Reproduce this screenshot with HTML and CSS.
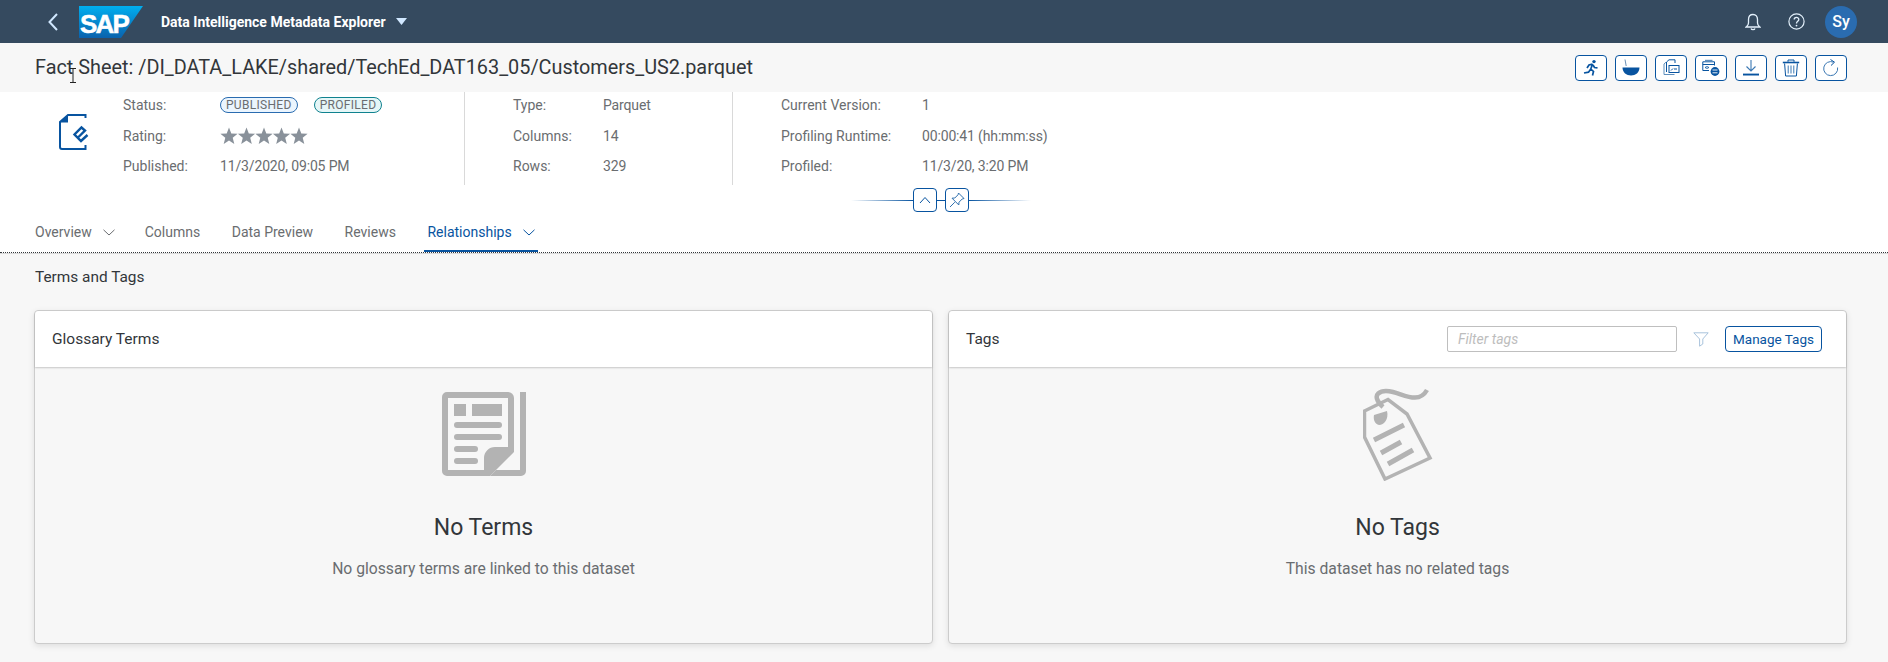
FILE: index.html
```html
<!DOCTYPE html>
<html>
<head>
<meta charset="utf-8"/>
<title>Fact Sheet</title>
<link rel="stylesheet" href="styles.css">
</head>
<body>

<header class="shell">
  <svg class="shell-back" width="12" height="20" viewBox="0 0 12 20"><path d="M10 2 L2.5 10 L10 18" fill="none" stroke="#d1e8ff" stroke-width="2"/></svg>
  <svg class="sap-logo" width="64" height="32" viewBox="0 0 64 32">
    <defs><linearGradient id="sapblue" x1="0" y1="0" x2="0" y2="1"><stop offset="0" stop-color="#00aeef"/><stop offset="1" stop-color="#0a62ad"/></linearGradient></defs>
    <polygon points="0,0 64,0 42,32 0,32" fill="url(#sapblue)"/>
    <text x="1" y="27" class="sap-text">SAP</text>
  </svg>
  <span class="shell-title">Data Intelligence Metadata Explorer</span>
  <svg class="shell-caret" width="11" height="7" viewBox="0 0 11 7"><polygon points="0,0 11,0 5.5,7" fill="#d1e8ff"/></svg>
  <span class="shell-space"></span>
  <svg class="shell-icon" width="16" height="18" viewBox="0 0 16 18"><path d="M8 1.5 C5 1.5 3.5 3.5 3.5 6.5 V10 C3.5 12 2.5 13 1.2 14 H14.8 C13.5 13 12.5 12 12.5 10 V6.5 C12.5 3.5 11 1.5 8 1.5 Z M6 15.5 C6.5 17 9.5 17 10 15.5" fill="none" stroke="#e3f0fb" stroke-width="1.3"/></svg>
  <svg class="shell-icon help" width="17" height="17" viewBox="0 0 17 17"><circle cx="8.5" cy="8.5" r="7.6" fill="none" stroke="#e3f0fb" stroke-width="1.2"/><path d="M6.2 6.6 C6.2 3.8 10.8 3.8 10.8 6.4 C10.8 8.2 8.5 8.2 8.5 10.4" fill="none" stroke="#e3f0fb" stroke-width="1.3"/><circle cx="8.5" cy="12.6" r="0.9" fill="#e3f0fb"/></svg>
  <span class="avatar">Sy</span>
</header>

<div class="titlebar">
  <h1>Fact Sheet: /DI_DATA_LAKE/shared/TechEd_DAT163_05/Customers_US2.parquet</h1>
  <div class="actions">
    <button class="icon-btn"><svg width="18" height="18" viewBox="0 0 18 18"><circle cx="12" cy="2.6" r="1.7" fill="#0854a0"/><path d="M10.5 5 L7 6 L5 9 M10.5 5 L8.8 10 L11.5 12.5 L10.5 16.5 M8.8 10 L6.5 13.2 L2 14 M11 6 L12.5 8.5 L15.5 8.8" fill="none" stroke="#0854a0" stroke-width="1.7"/></svg></button>
    <button class="icon-btn"><svg width="18" height="18" viewBox="0 0 18 18"><path d="M0.5 8.5 H17.5 C17.5 13.5 13.5 16.5 9 16.5 C4.5 16.5 0.5 13.5 0.5 8.5 Z" fill="#0854a0"/><path d="M3 0.5 L4.2 7" stroke="#6a8fb5" stroke-width="1" fill="none"/></svg></button>
    <button class="icon-btn"><svg width="18" height="18" viewBox="0 0 18 18"><path d="M4.5 13 V3 L7 0.8 H13 V4" fill="none" stroke="#0854a0" stroke-width="1"/><path d="M2 15.5 V5 L4 3.2 M2 15.5 H12.5" fill="none" stroke="#5d8ebd" stroke-width="1"/><rect x="7" y="6.5" width="10" height="7" fill="none" stroke="#0854a0"/><path d="M9 11.5 L11 9.5 M12 10 H15" stroke="#0854a0" fill="none"/></svg></button>
    <button class="icon-btn"><svg width="18" height="18" viewBox="0 0 18 18"><path d="M0.8 11.5 V2.8 H12.5 V6.5 M0.8 5.5 H12.5 M0.8 11.5 H7" fill="none" stroke="#0854a0"/><rect x="3" y="0.8" width="7.5" height="1.8" fill="#5d8ebd"/><path d="M3 8.5 L5 7.5 L7 8.5 L5 9.5 Z" fill="none" stroke="#0854a0" stroke-width="0.8"/><circle cx="13" cy="12.5" r="4.4" fill="#0854a0"/><path d="M10.5 11 H15.5 M10.5 13.8 H15.5" stroke="#fff" stroke-width="0.9"/></svg></button>
    <button class="icon-btn"><svg width="18" height="18" viewBox="0 0 18 18"><path d="M9 1 V11.5 M4.5 7.5 L9 12 L13.5 7.5" fill="none" stroke="#3b78b3" stroke-width="1.1"/><rect x="1" y="14.6" width="16" height="1.9" fill="#0854a0"/></svg></button>
    <button class="icon-btn"><svg width="18" height="18" viewBox="0 0 18 18"><path d="M0.8 3.5 H17.2" stroke="#0854a0" stroke-width="1.6" fill="none"/><path d="M6 2.8 V1 H12 V2.8" stroke="#0854a0" fill="none"/><path d="M2.6 4.5 L3.6 17 H14.4 L15.4 4.5" stroke="#0854a0" fill="none"/><path d="M6.2 6.5 V14.5 M9 6.5 V14.5 M11.8 6.5 V14.5" stroke="#3b78b3" fill="none"/></svg></button>
    <button class="icon-btn"><svg width="18" height="18" viewBox="0 0 18 18"><path d="M11.5 3.2 A7 7 0 1 0 15.6 8.5" fill="none" stroke="#3b78b3"/><path d="M8.5 0.5 L12.5 3.2 L9 6.5" fill="none" stroke="#0854a0"/></svg></button>
  </div>
</div>

<section class="facts">
  <svg class="doc-icon" width="31" height="36" viewBox="0 0 31 36">
    <path d="M26.5 4 V1 H9 L1 8 V33 A2 2 0 0 0 3 35 H26.5 V31" fill="none" stroke="#0854a0" stroke-width="2"/>
    <path d="M9 1 V8.5 H1 Z" fill="#0854a0"/>
    <path d="M19 23.5 L26 16.5 L22.5 13.5 L15.5 20.5 L22 27 L28.5 21" fill="none" stroke="#0854a0" stroke-width="2.4"/>
  </svg>
  <div class="facet facet-first">
    <span class="fact-label">Status:</span>
    <span class="fact-value pills"><span class="pill pill-blue">Published</span><span class="pill pill-teal">Profiled</span></span>
    <span class="fact-label">Rating:</span>
    <span class="fact-value"><svg class="stars" width="88" height="18" viewBox="0 0 88 18"><g fill="#89919a"><polygon id="st" points="9,0.5 11.3,6.4 17.6,6.8 12.7,10.8 14.3,17 9,13.6 3.7,17 5.3,10.8 0.4,6.8 6.7,6.4"/><use href="#st" x="17.5"/><use href="#st" x="35"/><use href="#st" x="52.5"/><use href="#st" x="70"/></g></svg></span>
    <span class="fact-label">Published:</span>
    <span class="fact-value">11/3/2020, 09:05 PM</span>
  </div>
  <div class="facet facet-second">
    <span class="fact-label">Type:</span><span class="fact-value">Parquet</span>
    <span class="fact-label">Columns:</span><span class="fact-value">14</span>
    <span class="fact-label">Rows:</span><span class="fact-value">329</span>
  </div>
  <div class="facet facet-third">
    <span class="fact-label">Current Version:</span><span class="fact-value">1</span>
    <span class="fact-label">Profiling Runtime:</span><span class="fact-value">00:00:41 (hh:mm:ss)</span>
    <span class="fact-label">Profiled:</span><span class="fact-value">11/3/20, 3:20 PM</span>
  </div>
</section>

<div class="collapse">
  <span class="collapse-line line-left"></span>
  <button class="icon-btn small"><svg width="12" height="8" viewBox="0 0 12 8"><path d="M1 7 L6 1.5 L11 7" fill="none" stroke="#0854a0"/></svg></button>
  <span class="collapse-mid"></span>
  <button class="icon-btn small"><svg width="16" height="16" viewBox="0 0 16 16"><path d="M9.5 1 L15 6.5 L13.2 7 L10 10.2 L9.8 13 L3 6.2 L5.8 6 L9 2.8 Z M5.8 10.2 L1 15" fill="none" stroke="#2f70ae"/></svg></button>
  <span class="collapse-line line-right"></span>
</div>

<nav class="tabs">
  <a class="tab tab-first">Overview<svg class="chev" width="12" height="7" viewBox="0 0 12 7"><path d="M0.5 0.8 L6 6 L11.5 0.8" fill="none" stroke="#6a6d70"/></svg></a>
  <a class="tab">Columns</a>
  <a class="tab">Data Preview</a>
  <a class="tab">Reviews</a>
  <a class="tab tab-active">Relationships<svg class="chev" width="12" height="7" viewBox="0 0 12 7"><path d="M0.5 0.8 L6 6 L11.5 0.8" fill="none" stroke="#0854a0"/></svg></a>
</nav>

<main class="content">
  <h2>Terms and Tags</h2>
  <div class="cards">
    <div class="card">
      <div class="card-head"><span class="card-title">Glossary Terms</span></div>
      <div class="card-body">
        <svg class="empty-icon" width="84" height="84" viewBox="0 0 84 84">
          <g fill="#b3b3b3">
            <path d="M5 0 H66 A6 6 0 0 1 72 6 V60 L48 84 H5 A5 5 0 0 1 0 79 V5 A5 5 0 0 1 5 0 Z M6 6 V78 H42 V66 A11 11 0 0 1 53 55 H66 V6 Z" fill-rule="evenodd"/>
            <path d="M78 0 H84 V79 A5 5 0 0 1 79 84 H48 L54 78 H78 Z"/>
            <rect x="12" y="12" width="12" height="12"/>
            <rect x="30" y="12" width="30" height="12"/>
            <rect x="12" y="30" width="48" height="6" rx="3"/>
            <rect x="12" y="42" width="48" height="6" rx="3"/>
            <rect x="12" y="54" width="24" height="6" rx="3"/>
            <rect x="12" y="66" width="24" height="6" rx="3"/>
          </g>
        </svg>
        <div class="empty-title">No Terms</div>
        <div class="empty-text">No glossary terms are linked to this dataset</div>
      </div>
    </div>
    <div class="card">
      <div class="card-head">
        <span class="card-title">Tags</span>
        <span class="filter-input">Filter tags</span>
        <svg class="filter-icon" width="16" height="15" viewBox="0 0 16 15"><path d="M0.8 0.8 H15.2 L9.8 7 V12 L6.6 14.2 V7 Z" fill="none" stroke="#a9c3dc"/></svg>
        <button class="text-btn">Manage Tags</button>
      </div>
      <div class="card-body">
        <svg class="empty-icon tag-icon" width="70" height="94" viewBox="0 0 70 94">
          <g fill="none" stroke="#b3b3b3">
            <path d="M1.5 24 L25 12.5 L44 27 L67 71 L22 92 L1.5 50 Z" stroke-width="3.5"/>
            <path d="M11 53 L41 38 M18 66 L38 55 M25 77 L50 63" stroke-width="5"/>
            <path d="M20 20 C6 7 18 2 30 5 C42 8 56 17 64 3" stroke-width="4.5"/>
          </g>
          <path d="M11 28 L24 24 C26 32 21 38 16 38 C12 37 10 33 11 28 Z" fill="#b3b3b3"/>
        </svg>
        <div class="empty-title">No Tags</div>
        <div class="empty-text">This dataset has no related tags</div>
      </div>
    </div>
  </div>
</main>

<svg class="cursor" width="8" height="15" viewBox="0 0 8 15"><path d="M1 0.5 H7 M4 0.5 V14.5 M1 14.5 H7" stroke="#222" fill="none"/></svg>

</body>
</html>
```

FILE: styles.css
```css
html, body {
   margin: 0;
   height: 662px;
   overflow: hidden;
   background-color: #f7f7f7;
   font-family: Roboto, "Liberation Sans", sans-serif;
   font-size: 14px;
   color: #32363a;
}

/* shell bar */
.shell {
   height: 43px;
   background-color: #354a5f;
   display: flex;
   align-items: center;
   padding: 0 31px 0 47px;
}

.shell-back {
   margin-right: 20px;
}

.sap-logo {
   margin-right: 18px;
}

.sap-text {
   font-family: "Liberation Sans", sans-serif;
   font-weight: bold;
   font-size: 26px;
   letter-spacing: -1.8px;
   fill: #fff;
   stroke: #fff;
   stroke-width: 0.5px;
}

.shell-title {
   color: #fff;
   font-weight: bold;
   font-size: 14px;
}

.shell-caret {
   margin-left: 10px;
}

.shell-space {
   flex: 1;
}

.shell-icon {
   margin-right: 27px;
}

.shell-icon.help {
   margin-right: 20px;
}

.avatar {
   width: 32px;
   height: 32px;
   border-radius: 50%;
   background-color: #2a6cb0;
   color: #fff;
   font-size: 16px;
   font-weight: 500;
   display: flex;
   align-items: center;
   justify-content: center;
}

/* title bar */
.titlebar {
   height: 49px;
   display: flex;
   align-items: center;
   justify-content: space-between;
   padding: 0 41px 0 35px;
   background-color: #f7f7f7;
}

h1 {
   margin: 0;
   font-size: 19.85px;
   font-weight: 400;
}

.actions {
   display: flex;
   gap: 8px;
}

.icon-btn {
   width: 32px;
   height: 26px;
   padding: 0;
   border: 1px solid #0854a0;
   border-radius: 4px;
   background-color: #fff;
   display: flex;
   align-items: center;
   justify-content: center;
}

.icon-btn.small {
   width: 24px;
   height: 24px;
}

/* facts */
.facts {
   height: 93px;
   background-color: #fff;
   display: flex;
}

.doc-icon {
   margin: 22px 33px 0 59px;
}

.facet {
   display: grid;
   grid-template-rows: repeat(3, 30.5px);
   align-items: start;
   align-content: start;
   color: #6a6d70;
   height: 93px;
   line-height: 26px;
}

.facet-first {
   grid-template-columns: 97px 1fr;
   width: 341px;
   border-right: 1px solid #d9d9d9;
}

.facet-second {
   grid-template-columns: 90px 1fr;
   width: 219px;
   padding-left: 48px;
   border-right: 1px solid #d9d9d9;
}

.facet-third {
   grid-template-columns: 141px 1fr;
   padding-left: 48px;
}

.fact-value {
   letter-spacing: -0.15px;
   height: 26px;
   display: flex;
   align-items: center;
}

.pills {
   gap: 16px;
}

.pill {
   font-size: 12px;
   line-height: 14px;
   text-transform: uppercase;
   padding: 0 5px;
   border-radius: 8px;
   border: 1px solid;
   letter-spacing: 0.3px;
}

.pill-blue {
   background-color: #ebf5fe;
   border-color: #2a6cb0;
}

.pill-teal {
   background-color: #e5f6f7;
   border-color: #0f828f;
}

.stars {
   display: block;
}

/* collapse bar */
.collapse {
   height: 24px;
   padding-top: 3px;
   padding-right: 6px;
   background-color: #fff;
   display: flex;
   align-items: center;
   justify-content: center;
}

.collapse-line {
   width: 62px;
   height: 1px;
}

.line-left {
   background: linear-gradient(to right, #fff, #0854a0);
}

.line-right {
   background: linear-gradient(to right, #0854a0, #fff);
}

.collapse-mid {
   width: 8px;
   height: 1px;
   background-color: #0854a0;
}

/* tabs */
.tabs {
   height: 40px;
   background-color: #fff;
   display: flex;
   padding-left: 35px;
   gap: 31.5px;
   border-bottom: 1px dotted #32363a;
   box-shadow: 0 1px 0 #d9d9d9;
}

.tab {
   display: flex;
   align-items: center;
   color: #6a6d70;
   position: relative;
   height: 40px;
}

.tab-first {
   margin-right: -1.5px;
}

.chev {
   margin-left: 11px;
}

.tab-active {
   color: #0854a0;
}

.tab-active:after {
   content: "";
   position: absolute;
   left: -3px;
   right: -3px;
   bottom: 0;
   height: 2px;
   background-color: #0854a0;
}

/* main */
.content {
   padding: 0 41px 0 34px;
}

h2 {
   margin: 0;
   padding-left: 1px;
   height: 57px;
   line-height: 49px;
   font-size: 15.4px;
   font-weight: 400;
}

.cards {
   display: grid;
   grid-template-columns: 1fr 1fr;
   gap: 15px;
}

.card {
   height: 332px;
   border: 1px solid #ccc;
   border-radius: 4px;
   box-shadow: 0 2px 6px rgba(0, 0, 0, 0.1);
   display: flex;
   flex-direction: column;
   background-color: #f7f7f7;
}

.card-head {
   height: 56px;
   flex: none;
   background-color: #fff;
   border-radius: 4px 4px 0 0;
   box-shadow: 0 1px 2px rgba(0, 0, 0, 0.2);
   display: flex;
   align-items: center;
   padding: 0 24px 0 17px;
}

.card-title {
   font-size: 15.5px;
   flex: 1;
}

.filter-input {
   width: 218px;
   height: 24px;
   line-height: 24px;
   padding-left: 10px;
   border: 1px solid #bfbfbf;
   border-radius: 2px;
   font-style: italic;
   color: #bdbdbd;
   background-color: #fff;
}

.filter-icon {
   margin: 0 16px 0 16px;
}

.text-btn {
   width: 97px;
   height: 26px;
   padding: 0;
   font-family: inherit;
   font-size: 13.5px;
   color: #0854a0;
   background-color: #fff;
   border: 1px solid #0854a0;
   border-radius: 4px;
}

.card-body {
   display: flex;
   flex-direction: column;
   align-items: center;
   padding-top: 25px;
}

.empty-icon {
   display: block;
}

.tag-icon {
   margin-top: -5px;
   margin-bottom: -5px;
}

.empty-title {
   font-size: 23px;
   line-height: 30px;
   margin-top: 37px;
}

.empty-text {
   font-size: 15.7px;
   line-height: 20px;
   margin-top: 16px;
   color: #6a6d70;
}

.cursor {
   position: absolute;
   left: 69px;
   top: 68px;
}
```
